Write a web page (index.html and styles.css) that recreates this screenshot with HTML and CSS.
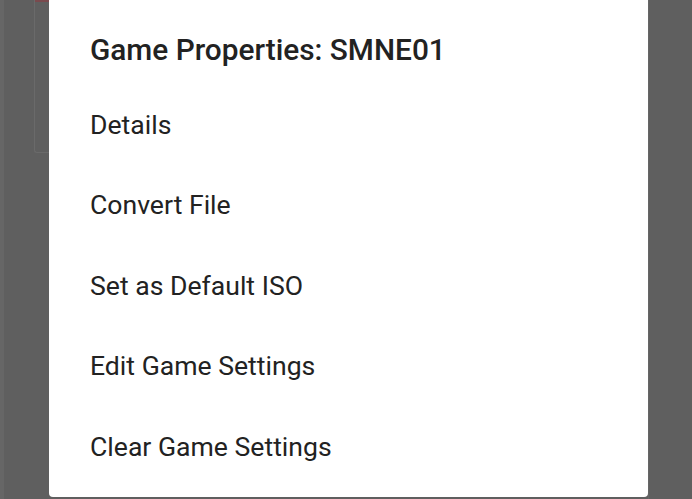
FILE: index.html
```html
<!DOCTYPE html>
<html lang="en">
<head>
    <meta charset="UTF-8">
    <meta name="viewport" content="width=device-width, initial-scale=1.0">
    <title>Game Properties</title>
    <link rel="stylesheet" href="styles.css">
</head>
<body>

    <div class="screen">
        <div class="side side-left">
            <div class="edge"></div>
            <div class="card-behind">
                <div class="card-accent"></div>
            </div>
        </div>

        <div class="dialog">
            <h2 class="dialog-title">Game Properties: SMNE01</h2>
            <ul class="menu">
                <li>Details</li>
                <li>Convert File</li>
                <li>Set as Default ISO</li>
                <li>Edit Game Settings</li>
                <li>Clear Game Settings</li>
            </ul>
        </div>

        <div class="side side-right"></div>
    </div>

</body>
</html>
```

FILE: styles.css
```css
html, body {
    margin: 0;
    padding: 0;
}

body {
    font-family: Roboto, "Noto Sans", sans-serif;
    background-color: #5f5f5f;
    height: 499px;
    overflow: hidden;
}

.screen {
    display: flex;
    height: 499px;
}

.side-left {
    width: 49px;
    display: flex;
    flex-shrink: 0;
}

.edge {
    width: 4px;
    background-color: #666;
}

.card-behind {
    margin-left: 30px;
    flex: 1;
    height: 152px;
    border-left: 1px solid #6a6a6a;
    border-bottom: 1px solid #6a6a6a;
    border-bottom-left-radius: 3px;
}

.card-accent {
    height: 2px;
    background-color: #7a4a4e;
}

.dialog {
    width: 599px;
    height: 497px;
    flex-shrink: 0;
    background-color: #fff;
    border-radius: 0 0 4px 4px;
    box-sizing: border-box;
    padding: 32px 0 0 41px;
    color: #222;
}

.dialog-title {
    margin: 0;
    font-size: 29.8px;
    font-weight: 500;
    line-height: 36px;
}

.menu {
    list-style: none;
    margin: 40px 0 0;
    padding: 0;
    display: flex;
    flex-direction: column;
    gap: 46.4px;
}

.menu li {
    font-size: 26.6px;
    line-height: 34px;
}

.side-right {
    flex: 1;
    border-left: 1px solid #666;
}
```
